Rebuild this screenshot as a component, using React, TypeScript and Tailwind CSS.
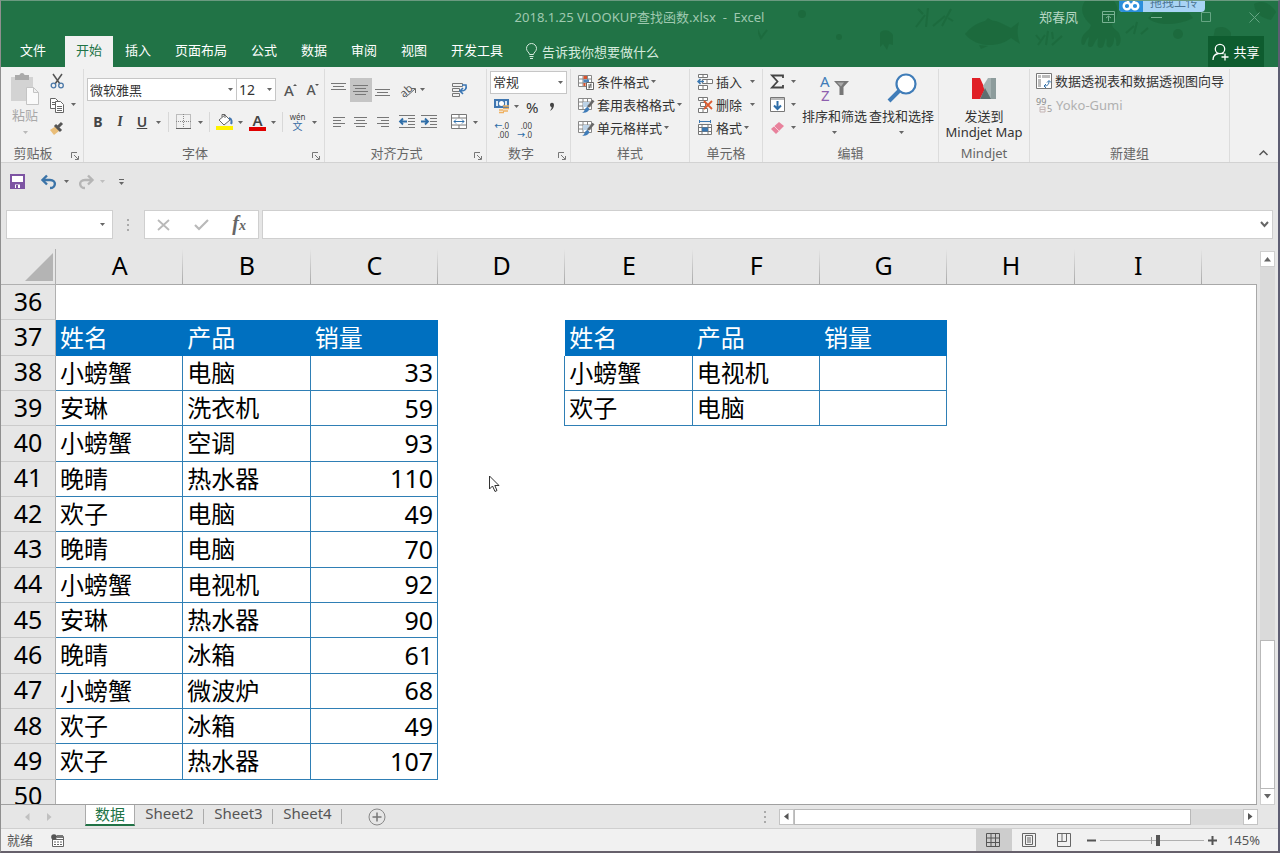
import React, { useState } from "react";

const TABS = ["插入", "页面布局", "公式", "数据", "审阅", "视图", "开发工具"];
const COLS = ["A", "B", "C", "D", "E", "F", "G", "H", "I"];

const SALES: [string, string, number][] = [
  ["小螃蟹", "电脑", 33],
  ["安琳", "洗衣机", 59],
  ["小螃蟹", "空调", 93],
  ["晚晴", "热水器", 110],
  ["欢子", "电脑", 49],
  ["晚晴", "电脑", 70],
  ["小螃蟹", "电视机", 92],
  ["安琳", "热水器", 90],
  ["晚晴", "冰箱", 61],
  ["小螃蟹", "微波炉", 68],
  ["欢子", "冰箱", 49],
  ["欢子", "热水器", 107],
];

const LOOKUPS: [string, string][] = [
  ["小螃蟹", "电视机"],
  ["欢子", "电脑"],
];

const HEADS = ["姓名", "产品", "销量"];

function Caret({ className = "" }: { className?: string }) {
  return (
    <svg width="5" height="3" viewBox="0 0 5 3" className={`shrink-0 ${className}`}>
      <path d="M0 0h5L2.5 3z" fill="#666" />
    </svg>
  );
}

function Svg({ w = 16, h = 16, children }: { w?: number; h?: number; children: React.ReactNode }) {
  return (
    <svg width={w} height={h} viewBox={`0 0 ${w} ${h}`} fill="none" className="shrink-0 overflow-visible">
      {children}
    </svg>
  );
}

function IconBtn({ label, className = "", children }: { label: string; className?: string; children: React.ReactNode }) {
  return (
    <button aria-label={label} className={`flex h-6 items-center justify-center ${className}`}>
      {children}
    </button>
  );
}

function Group({ name, className = "", launcher, children }: { name: string; className?: string; launcher?: boolean; children: React.ReactNode }) {
  return (
    <section className={`flex shrink-0 flex-col border-r border-[#dcdcdc] ${className}`}>
      <div className="h-[75px]">{children}</div>
      <div className="relative text-center leading-[18px] text-[#666]">
        {name}
        {launcher && (
          <button aria-label={`${name}设置`} className="absolute right-1 top-2">
            <Svg w={8} h={8}>
              <path d="M.5 6V.5H6M3 3l4 4M7.5 4v3.5H4" stroke="#777" />
            </Svg>
          </button>
        )}
      </div>
    </section>
  );
}

function Lines({ widths, top }: { widths: number[]; top: number }) {
  return (
    <Svg w={16} h={20}>
      {widths.map((w, i) => (
        <path key={i} d={`M${(15 - w) / 2} ${top + i * 3 + 0.5}h${w}`} stroke="#777" />
      ))}
    </Svg>
  );
}

function SideLines({ right }: { right?: boolean }) {
  return (
    <Svg w={16} h={20}>
      {[12, 8, 12, 8].map((w, i) => (
        <path key={i} d={`M${right ? 14 - w : 2} ${5.5 + i * 3}h${w}`} stroke="#777" />
      ))}
    </Svg>
  );
}

function IndentIcon({ out }: { out?: boolean }) {
  return (
    <Svg w={16} h={14}>
      <path d="M0 .5h16M9 3.5h7M9 6.5h7M9 9.5h7M0 12.5h16" stroke="#777" />
      <path d={out ? "M8 6.5H1M4 3.5l-3 3 3 3" : "M0 6.5h7M4 3.5l3 3-3 3"} stroke="#2f6ea8" strokeWidth="1.8" />
    </Svg>
  );
}

function StyleBtn({ label, children }: { label: string; children: React.ReactNode }) {
  return (
    <button className="flex h-[23px] items-center whitespace-nowrap">
      {children}
      <span className="ml-[3px] mr-[2px]">{label}</span>
      <Caret />
    </button>
  );
}

function GridIcon({ children }: { children?: React.ReactNode }) {
  return (
    <Svg>
      <path d="M.5 1.5h13v11H.5zM.5 5h13M.5 9h13M5 1.5v11M9.5 1.5v11" fill="#fff" stroke="#888" />
      {children}
    </Svg>
  );
}

function Brush() {
  return (
    <>
      <path d="M5 5h6v5H5z" fill="#bcd2e6" />
      <path d="M15.5 3.5L10 10" stroke="#666" strokeWidth="2.6" />
      <path d="M4 15.5c3-.3 2-4.500 5.500-5.500l2 2c-1 3-4.500 4.500-7.500 3.500z" fill="#3f7cb8" />
    </>
  );
}

function TitleArt() {
  return (
    <svg width="520" height="50" viewBox="0 0 520 50" fill="#1b683b" className="pointer-events-none absolute right-0 top-0">
      <g opacity=".75">
        <path d="M207 33c9-11 24-18 38-10l8 4 8-6c-2 7-2 14 1 22l-9-6c-12 10-35 10-46-4z" />
        <path d="M225 22l5-5 8 5zM230 45l-7 3-2-4z" />
        <path d="M327 0h29c7 9 2 18-2 24 2 6 7 5 8 11 2 5-1 11-3 10s1-6-3-9c1 6-3 12-6 10s0-5-2-9c-2 5-2 11-6 10s-2-6-2-10c-4 3-4 10-8 9s-1-6-1-10c-4 2-3 8-6 8s-2-9 2-12c3-3 5-4 6-8-8-7-12-16-6-24z" />
        <path d="M122 32c2-4 10-4 13 2v10l-4-1-2 6-4-6-3 3z" />
        <circle cx="44" cy="13" r="4" />
        <circle cx="81" cy="36" r="3" />
        <circle cx="420" cy="33" r="5" />
        <path d="M457 28c4-3 12-3 16 4v6h-18z" />
        <path d="M390 17c8 8 30 8 45 0l-4-5h-36z" />
        <path d="M496 3c9-5 17 0 22 8l-5 8c-9-2-16-6-17-16z" />
      </g>
      <g stroke="#1b683b" strokeWidth="2" fill="none" opacity=".7">
        <path d="M158 26l9-12m1 12l2-19m5 18l12-10m-3 10l9-17M165 13l-5-5m30 9l5 3" />
        <path d="M280 44l7-10m1 10l2-14m4 14l10-9m-26-1l4 5m12-8l1 7" />
        <path d="M368 32l8-7m0 8l3-12m4 12l7-6" />
        <path d="M-10 28l7 8 2-8 4 9 6-8" />
      </g>
    </svg>
  );
}

function Header() {
  return (
    <header className="relative overflow-hidden bg-[#217346] text-white">
      <TitleArt />
      <div className="relative grid h-[35px] grid-cols-[1fr_auto_1fr] items-center pb-[3px] text-[#9fc9b0]">
        <span />
        <h1 className="whitespace-pre text-[13px]">2018.1.25 VLOOKUP查找函数.xlsx  -  Excel</h1>
        <div className="flex items-center justify-end pr-[18px]">
          <span className="mr-6 text-[#b5d6c3]">郑春凤</span>
          <button aria-label="功能区显示选项" className="mr-9">
            <Svg w={13} h={12}>
              <path d="M.5.5h12v11H.5zM.5 3.5h12M6.5 10V5M4 7l2.500-2L9 7" stroke="#79b293" />
            </Svg>
          </button>
          <button aria-label="最小化" className="mr-[38px]">
            <Svg w={12} h={12}>
              <path d="M0 6.500h11" stroke="#79b293" />
            </Svg>
          </button>
          <button aria-label="最大化" className="mr-[37px]">
            <Svg w={11} h={11}>
              <path d="M.5.5h9v9h-9z" stroke="#65a583" />
            </Svg>
          </button>
          <button aria-label="关闭">
            <Svg w={11} h={11}>
              <path d="M.5.5l10 10M10.500.5l-10 10" stroke="#65a583" />
            </Svg>
          </button>
        </div>
      </div>
      <button className="absolute -top-2 right-[73px] flex h-[19px] w-[86px] overflow-hidden rounded-b-sm bg-[#a9d4f5] text-[12px] text-[#4c7594]">
        <span className="flex h-full w-6 items-center justify-center bg-[#2b8fdc]">
          <svg width="18" height="12" viewBox="0 0 18 12" fill="none" stroke="#fff" strokeWidth="2.4" className="mt-1">
            <circle cx="5" cy="7" r="3.300" />
            <circle cx="13" cy="7" r="3.300" />
            <path d="M6 3a3 3 0 0 1 6 0" />
          </svg>
        </span>
        <span className="flex-1 leading-5">拖拽上传</span>
      </button>
      <nav className="relative flex h-[31px]">
        <button className="w-16 pb-[3px]">文件</button>
        <button className="w-12 bg-[#f1f1f1] pb-[3px] text-[#217346]">开始</button>
        {TABS.map((t) => (
          <button key={t} className="px-3 pb-[3px]">{t}</button>
        ))}
        <button className="ml-[10px] flex items-center gap-1 text-[#d5eadd]">
          <Svg w={13} h={17}>
            <path d="M4.500 11.500c0-2-3-3-3-6a5 5 0 0 1 10 0c0 3-3 4-3 6zM4.500 13.500h4M5 15.500h3" stroke="#d5eadd" />
          </Svg>
          告诉我你想要做什么
        </button>
        <button className="ml-auto mr-[14px] flex w-14 items-center justify-center gap-1 bg-[#0e5c2f]">
          <Svg w={17} h={18}>
            <circle cx="8" cy="6" r="4.700" stroke="#fff" strokeWidth="1.300" />
            <path d="M1 17c0-4 2-6 5.500-6.500M10 10l1.500 1M13 10.500v7M9.500 14h7" stroke="#fff" strokeWidth="1.300" />
          </Svg>
          共享
        </button>
      </nav>
    </header>
  );
}

function Ribbon() {
  return (
    <div className="relative flex h-[96px] border-b border-[#d2d2d2] bg-[#f1f1f1] pt-[2px] text-[#333]">
      <Group name="剪贴板" launcher className="w-[83px] [&>div:last-child]:pr-[18px]">
        <div className="flex">
          <button className="flex w-12 flex-col items-center pt-1 text-[#a9a9a9]">
            <Svg w={30} h={32}>
              <path d="M1 4h22v24H1z" fill="#d3d3d3" />
              <path d="M5 2h14v5H5z" fill="#aaa" />
              <circle cx="12" cy="2.500" r="2.500" fill="#aaa" />
              <path d="M16.500 14.500h7l5 5v12h-12zM23.500 14.500v5h5" fill="#fafafa" stroke="#c4c4c4" />
            </Svg>
            <span className="leading-5">粘贴</span>
            <Caret className="mt-[6px] opacity-40" />
          </button>
          <div className="flex flex-col">
            <IconBtn label="剪切" className="w-4">
              <Svg w={15} h={16}>
                <path d="M3 1l7 10M12 1L5 11" stroke="#555" strokeWidth="1.500" />
                <circle cx="3.500" cy="12.500" r="2.300" stroke="#4a78a8" strokeWidth="1.300" />
                <circle cx="11" cy="12.500" r="2.300" stroke="#4a78a8" strokeWidth="1.300" />
              </Svg>
            </IconBtn>
            <IconBtn label="复制" className="h-[23px]">
              <Svg>
                <path d="M1.500 1.500h5l3 3v7h-8z" fill="#fff" stroke="#666" />
                <path d="M6.500 4.500h5l3 3v8h-8zM8 9.500h5M8 11.500h5M8 13.500h5M3 5.500h3M3 7.500h3" fill="#fff" stroke="#666" />
              </Svg>
              <Caret className="ml-[6px]" />
            </IconBtn>
            <IconBtn label="格式刷" className="w-4">
              <Svg>
                <path d="M1 10l6-4 3 5-5 4z" fill="#e9bd78" />
                <path d="M6 5l6 6M9 7l4-4" stroke="#555" strokeWidth="3" />
              </Svg>
            </IconBtn>
          </div>
        </div>
      </Group>

      <Group name="字体" launcher className="w-[241px] [&>div:last-child]:pr-[18px]">
        <div className="flex h-[41px] items-center pl-[3px]">
          <label className="relative flex items-center">
            <select aria-label="字体名称" className="h-[23px] w-[150px] appearance-none border border-[#c6c6c6] bg-white pl-[2px] leading-5 outline-none">
              <option>微软雅黑</option>
            </select>
            <Caret className="pointer-events-none absolute right-1" />
          </label>
          <label className="relative -ml-px flex items-center">
            <select aria-label="字号" className="h-[23px] w-10 appearance-none border border-[#c6c6c6] bg-white pl-[2px] text-[14px] leading-5 outline-none">
              <option>12</option>
            </select>
            <Caret className="pointer-events-none absolute right-1" />
          </label>
          <IconBtn label="增大字号" className="ml-1 w-[22px] text-[15px] font-medium text-[#555]">
            A<Svg w={4} h={14}><path d="M-1 3l2-2 2 2z" fill="#555" /></Svg>
          </IconBtn>
          <IconBtn label="减小字号" className="w-[22px] text-[14px] font-medium text-[#555]">
            A<Svg w={4} h={14}><path d="M-1 1l2 2 2-2z" fill="#555" /></Svg>
          </IconBtn>
        </div>
        <div className="flex items-center pl-[3px] text-[14px] text-[#444]">
          <IconBtn label="加粗" className="w-[22px] font-bold">B</IconBtn>
          <IconBtn label="倾斜" className="w-[22px] font-serif font-bold italic">I</IconBtn>
          <IconBtn label="下划线" className="w-[22px] font-semibold underline">U</IconBtn>
          <Caret className="ml-[3px] mr-[7px]" />
          <i className="h-5 w-px bg-[#d8d8d8]" />
          <IconBtn label="边框" className="ml-[7px]">
            <Svg>
              <path d="M.5.5h14v14H.5zM7.500 0v15M0 7.500h15" stroke="#888" strokeDasharray="1 1" />
              <path d="M0 14.500h15" stroke="#666" />
            </Svg>
            <Caret className="ml-[6px]" />
          </IconBtn>
          <i className="ml-[6px] h-5 w-px bg-[#d8d8d8]" />
          <IconBtn label="填充颜色" className="ml-[6px]">
            <Svg w={17} h={18}>
              <path d="M3 7l6-5 5 5-6 5z" fill="#fff" stroke="#666" />
              <path d="M6 4V1.500h3V5" stroke="#666" />
              <path d="M13 5c3 1 3 4 2 6" stroke="#4577b0" strokeWidth="2" />
              <path d="M0 13h17v4H0z" fill="#fff200" />
            </Svg>
            <Caret className="ml-[5px]" />
          </IconBtn>
          <IconBtn label="字体颜色" className="ml-[6px]">
            <span className="flex w-[17px] flex-col items-center">
              <span className="text-[15px] font-semibold leading-[13px]">A</span>
              <i className="h-1 w-full bg-[#e00000]" />
            </span>
            <Caret className="ml-[5px]" />
          </IconBtn>
          <i className="ml-[6px] h-5 w-px bg-[#d8d8d8]" />
          <IconBtn label="拼音" className="ml-[7px]">
            <span className="flex w-[15px] flex-col items-center">
              <span className="text-[8px] leading-[8px]">wén</span>
              <span className="text-[10px] leading-[10px] text-[#3a6ea5]">文</span>
            </span>
            <Caret className="ml-[7px]" />
          </IconBtn>
        </div>
      </Group>

      <Group name="对齐方式" launcher className="w-[162px] [&>div:last-child]:pr-[18px]">
        <div className="flex h-[41px] items-center pl-[3px]">
          <IconBtn label="顶端对齐" className="w-[22px]"><Lines widths={[15, 11, 15]} top={3} /></IconBtn>
          <IconBtn label="垂直居中" className="w-[22px] bg-[#c5c5c5]"><Lines widths={[15, 11, 15, 11]} top={5} /></IconBtn>
          <IconBtn label="底端对齐" className="w-[22px]"><Lines widths={[15, 11, 15]} top={9} /></IconBtn>
          <IconBtn label="方向" className="ml-[6px]">
            <Svg w={17} h={16}>
              <text x="0" y="12" fontSize="11" fill="#555" transform="rotate(-42 7 9)">ab</text>
              <path d="M6 15l9-8M11 6.500h4.500V11" stroke="#666" />
            </Svg>
            <Caret className="ml-[3px]" />
          </IconBtn>
          <IconBtn label="自动换行" className="ml-6 w-5">
            <Svg w={17} h={16}>
              <path d="M1.500 1.500h10v3h-10zM1.500 6.500h7v3h-7zM1.500 11.500h7v3h-7z" stroke="#777" />
              <path d="M11 3h4c1 4-1 6-5 6M12 6L9 9l3 3" stroke="#3a76b4" strokeWidth="1.600" />
            </Svg>
          </IconBtn>
        </div>
        <div className="flex items-center pl-[3px]">
          <IconBtn label="左对齐" className="w-[22px]"><SideLines /></IconBtn>
          <IconBtn label="居中" className="w-[22px]"><Lines widths={[13, 9, 13, 9]} top={5} /></IconBtn>
          <IconBtn label="右对齐" className="w-[22px]"><SideLines right /></IconBtn>
          <IconBtn label="减少缩进量" className="ml-[2px] w-[22px]"><IndentIcon out /></IconBtn>
          <IconBtn label="增加缩进量" className="w-[22px]"><IndentIcon /></IconBtn>
          <IconBtn label="合并后居中" className="ml-[11px]">
            <Svg>
              <path d="M.5.5h15v14H.5zM.5 4h15M.5 11h15M8 .5V4M8 11v3.500" fill="#fff" stroke="#777" />
              <path d="M3 7.500h10M5 5.500l-2 2 2 2M11 5.500l2 2-2 2" stroke="#2f6ea8" />
            </Svg>
            <Caret className="ml-[6px]" />
          </IconBtn>
        </div>
      </Group>

      <Group name="数字" launcher className="w-[84px] pl-[3px] [&>div:last-child]:pr-[18px]">
        <label className="relative flex h-[26px] items-center">
          <select aria-label="数字格式" className="h-[23px] w-[77px] appearance-none border border-[#c6c6c6] bg-white pl-[2px] leading-5 outline-none">
            <option>常规</option>
          </select>
          <Caret className="pointer-events-none absolute right-[7px]" />
        </label>
        <div className="flex h-[23px] items-center">
          <IconBtn label="会计数字格式" className="ml-[3px]">
            <Svg w={17} h={17}>
              <path d="M1 1h15v9H1z" fill="#3f76b0" />
              <circle cx="8.500" cy="5.500" r="2.500" fill="#fff" />
              <path d="M3 3h2v5H3zM12 3h2v5h-2z" fill="#dbe8f4" />
              <path d="M10 8h6M10 10.500h6M10 13h5M6 12h4M6 14.500h5" stroke="#efb160" strokeWidth="1.700" />
            </Svg>
            <Caret className="ml-1" />
          </IconBtn>
          <IconBtn label="百分比样式" className="ml-[7px] text-[15px]">%</IconBtn>
          <IconBtn label="千位分隔样式" className="ml-[11px]">
            <Svg w={7} h={10}><path d="M1 2.500a2 2 0 1 1 4 .5c0 3-2 5-4 6 1-2 2-3 1.500-4C1.500 5 1 4 1 2.500z" fill="#444" /></Svg>
          </IconBtn>
        </div>
        <div className="flex h-6 items-center gap-2 pl-1 text-[8px] leading-[9px] text-[#444]">
          <button aria-label="增加小数位数" className="w-[15px] text-right"><b className="text-[#2f6ea8]">←</b>.0<br />.00</button>
          <button aria-label="减少小数位数" className="w-[15px] text-right">.00<br /><b className="text-[#2f6ea8]">→</b>.0</button>
        </div>
      </Group>

      <Group name="样式" className="w-[119px]">
        <div className="flex flex-col pl-[7px] pt-px">
          <StyleBtn label="条件格式">
            <GridIcon>
              <path d="M5.500 2h3.500v3H5.500zM5.500 9h2v3h-2z" fill="#d9532c" />
              <path d="M5.500 5.500H11v3H5.500z" fill="#4b83ba" />
              <path d="M8.500 8.500h7v7h-7zM10 11h4M10 13h4M13 9.500l-2 5" fill="#fff" stroke="#666" />
            </GridIcon>
          </StyleBtn>
          <StyleBtn label="套用表格格式"><GridIcon><Brush /></GridIcon></StyleBtn>
          <StyleBtn label="单元格样式"><GridIcon><Brush /></GridIcon></StyleBtn>
        </div>
      </Group>

      <Group name="单元格" className="w-[73px]">
        <div className="flex flex-col pl-[7px] pt-px [&>button:not(:last-child)_span]:mr-2">
          <StyleBtn label="插入">
            <Svg>
              <path d="M1.500.5h9v3h-9zM6 .5v3M1.500 11.500h9v4h-9zM6 11.500v4M5.500 5.500h10v4h-10zM10 5.500v4" fill="#fff" stroke="#777" />
              <path d="M7 7.500H1M3.500 5L1 7.500 3.500 10" stroke="#3b77b0" strokeWidth="1.500" />
            </Svg>
          </StyleBtn>
          <StyleBtn label="删除">
            <Svg>
              <path d="M1.500.5h9v3h-9zM6 .5v3M1.500 11.500h9v4h-9zM6 11.500v4M3.500 5.500h5v4h-5z" fill="#fff" stroke="#777" />
              <path d="M7 4l8 8M15 4l-8 8" stroke="#dc5b30" strokeWidth="1.800" />
            </Svg>
          </StyleBtn>
          <StyleBtn label="格式">
            <Svg>
              <path d="M1.500 4.500h13v10h-13zM1.500 7.500h13M1.500 11.500h13M5 4.500v10M11 4.500v10" fill="#fff" stroke="#777" />
              <path d="M5 7.500h6v4H5z" fill="#3b77b0" />
              <path d="M2 1.500h12M2.500 0v3M13.500 0v3" stroke="#3b77b0" />
            </Svg>
          </StyleBtn>
        </div>
      </Group>

      <Group name="编辑" className="w-[176px]">
        <div className="flex pl-[6px]">
          <div className="mr-1 flex w-7 flex-col pt-px">
            <IconBtn label="自动求和" className="h-[23px]">
              <Svg w={15} h={15}><path d="M13 4V1.500H2L7.500 7.500 2 13.500h11V11" stroke="#444" strokeWidth="1.800" /></Svg>
              <Caret className="ml-[6px]" />
            </IconBtn>
            <IconBtn label="填充" className="h-[23px]">
              <Svg w={15} h={15}>
                <path d="M.5.5h14v14H.5z" fill="#fff" stroke="#777" />
                <path d="M0 2h15" stroke="#777" />
                <path d="M7.500 4v8M4 8.500L7.500 12 11 8.500" stroke="#2f6ea8" strokeWidth="2" />
              </Svg>
              <Caret className="ml-[6px]" />
            </IconBtn>
            <IconBtn label="清除" className="h-[23px]">
              <Svg w={15} h={14}>
                <path d="M9 1l5 4-8 8-5-5z" fill="#e8829c" />
                <path d="M4 5l5 5" stroke="#f7cdd8" />
              </Svg>
              <Caret className="ml-[6px]" />
            </IconBtn>
          </div>
          <button className="flex w-[67px] flex-col items-center whitespace-nowrap">
            <span className="flex h-[38px] items-center">
              <Svg w={30} h={30}>
                <text x="0" y="14" fontSize="15" fill="#3f7cb8">A</text>
                <text x="1" y="28" fontSize="15" fill="#8e5fae">Z</text>
                <path d="M14 8h15l-5.500 6v8h-4v-8z" fill="#777" />
                <path d="M17 9.500h7l-3 4z" fill="#aaa" />
              </Svg>
            </span>
            <span className="leading-[18px]">排序和筛选</span>
            <Caret className="mt-[6px]" />
          </button>
          <button className="flex w-[67px] flex-col items-center whitespace-nowrap">
            <span className="flex h-[38px] items-center">
              <Svg w={30} h={30}>
                <circle cx="19" cy="11" r="9.500" fill="#fff" stroke="#3f7cb8" strokeWidth="2.200" />
                <path d="M12 18L2 28" stroke="#3f7cb8" strokeWidth="4" />
              </Svg>
            </span>
            <span className="leading-[18px]">查找和选择</span>
            <Caret className="mt-[6px]" />
          </button>
        </div>
      </Group>

      <Group name="Mindjet" className="w-[91px]">
        <button className="flex w-full flex-col items-center whitespace-nowrap">
          <span className="flex h-[39px] items-center">
            <Svg w={24} h={22}>
              <path d="M0 0h8l5 11-5 10H0z" fill="#e01f26" />
              <path d="M24 0h-6l-5 11 5 10h6z" fill="#8d9c9c" />
              <path d="M16 0h3v21h-3L11 8z" fill="#a3b0b0" />
              <path d="M8 21l5-11 6 11z" fill="#5f6e70" />
            </Svg>
          </span>
          <span className="leading-4">发送到</span>
          <span className="leading-4">Mindjet Map</span>
        </button>
      </Group>

      <Group name="新建组" className="w-[200px]">
        <div className="flex flex-col items-start pl-[6px]">
          <button className="flex h-[24px] items-center gap-[3px] whitespace-nowrap">
            <Svg>
              <path d="M.5.5h15v15H.5z" fill="#fff" stroke="#777" />
              <path d="M2 2h3v3H2zM6 2h8v3H6zM2 6h3v8H2z" fill="#bbb" />
              <path d="M8 13c4 0 5-2 5-5M11 9.500l2-2 2 2M10 11l-2 2 2 2" stroke="#2f6ea8" />
            </Svg>
            数据透视表和数据透视图向导
          </button>
          <button className="flex h-[23px] items-center gap-1 text-[13px] text-[#b0b0b0]">
            <Svg>
              <text x="0" y="8" fontSize="9" fill="#888">99</text>
              <text x="11" y="15" fontSize="9" fill="#999">5</text>
              <path d="M4 10h5v5H4zM4 12.500h5" stroke="#c4b4b4" />
            </Svg>
            Yoko-Gumi
          </button>
        </div>
      </Group>
      <button aria-label="折叠功能区" className="absolute bottom-[6px] right-[10px]">
        <Svg w={9} h={6}><path d="M.5 5l4-4 4 4" stroke="#555" strokeWidth="1.500" /></Svg>
      </button>
    </div>
  );
}

function QuickAccess() {
  return (
    <div className="flex h-[37px] items-center pl-[9px]">
      <button aria-label="保存">
        <Svg w={15} h={15}>
          <path d="M1 1h13v13H1z" fill="#fff" stroke="#7d54a3" strokeWidth="2" />
          <path d="M2 8h11v6H2z" fill="#7d54a3" />
          <path d="M5 10.500h5V14H5z" fill="#fff" />
          <path d="M6 11h2v3H6z" fill="#7d54a3" />
        </Svg>
      </button>
      <button aria-label="撤消" className="ml-4 flex items-center">
        <Svg w={16} h={14}>
          <path d="M2 5h7c7 0 6 8 0 8" stroke="#3b74a8" strokeWidth="2.400" />
          <path d="M6 .5L1.500 5 6 9.500" stroke="#3b74a8" strokeWidth="2.400" />
        </Svg>
        <Caret className="ml-[7px]" />
      </button>
      <button aria-label="恢复" className="ml-[9px] flex items-center">
        <Svg w={16} h={14}>
          <path d="M14 5H7c-7 0-6 8 0 8" stroke="#b5b5b5" strokeWidth="2.400" />
          <path d="M10 .5L14.500 5 10 9.500" stroke="#b5b5b5" strokeWidth="2.400" />
        </Svg>
        <Caret className="ml-[6px] opacity-30" />
      </button>
      <button aria-label="自定义快速访问工具栏" className="ml-[14px]">
        <Svg w={6} h={6}><path d="M0 .5h5" stroke="#666" /><path d="M0 3h5L2.500 6z" fill="#666" /></Svg>
      </button>
    </div>
  );
}

function Dots() {
  return (
    <Svg w={3} h={12}>
      <path d="M0 0h2v2H0zM0 5h2v2H0zM0 10h2v2H0z" fill="#aaa" />
    </Svg>
  );
}

function FormulaBar() {
  const [formula, setFormula] = useState("");
  return (
    <div className="flex h-[49px] items-center px-[5px] py-[10px]">
      <div className="relative flex h-[29px] items-center">
        <input aria-label="名称框" className="h-full w-[107px] border border-[#cfcfcf] bg-white px-1 outline-none" />
        <Caret className="absolute right-2" />
      </div>
      <div className="flex w-[31px] justify-center"><Dots /></div>
      <div className="mr-[3px] flex h-[29px] w-[115px] items-center justify-between border border-[#cfcfcf] bg-white px-3">
        <button aria-label="取消"><Svg w={13} h={12}><path d="M1 1l11 10M12 1L1 11" stroke="#b9b9b9" strokeWidth="1.800" /></Svg></button>
        <button aria-label="输入"><Svg w={15} h={12}><path d="M1 6l4 4 9-9" stroke="#b9b9b9" strokeWidth="2.200" /></Svg></button>
        <button aria-label="插入函数" className="font-['Liberation_Serif',serif] text-[20px] font-bold italic leading-5 text-[#666]">
          f<span className="text-[14px]">x</span>
        </button>
      </div>
      <div className="relative flex h-[29px] flex-1 items-center">
        <input
          aria-label="编辑栏"
          value={formula}
          onChange={(e) => setFormula(e.target.value)}
          className="h-full w-full border border-[#cfcfcf] bg-white px-2 outline-none"
        />
        <button aria-label="展开编辑栏" className="absolute right-1">
          <Svg w={9} h={7}><path d="M1 1l3.500 4L8 1" stroke="#666" strokeWidth="2" /></Svg>
        </button>
      </div>
    </div>
  );
}

const BLUE = "border-r border-b border-[#2f7fb5] bg-white";
const HEAD = "bg-[#0070c0] text-white";

function cell(row: number, col: string): { text?: string | number; cls: string } {
  const left = "ABC".indexOf(col);
  const right = "EFG".indexOf(col);
  if (row === 37 && left >= 0) return { text: HEADS[left], cls: HEAD };
  if (row === 37 && right >= 0) return { text: HEADS[right], cls: HEAD };
  if (left >= 0 && row >= 38 && row <= 49) {
    return { text: SALES[row - 38][left], cls: left === 2 ? `${BLUE} pb-px text-right text-[25px]` : BLUE };
  }
  if (right >= 0 && row >= 38 && row <= 39) return { text: LOOKUPS[row - 38][right], cls: BLUE };
  if (col === "D" && row >= 38 && row <= 39) return { cls: "border-r border-[#2f7fb5] bg-white" };
  return { cls: "bg-white" };
}

function Sheet() {
  const rows = Array.from({ length: 15 }, (_, i) => 36 + i);
  return (
    <div className="flex min-h-0 flex-1">
      <div className="relative min-w-0 flex-1 overflow-hidden border-b border-[#a0a0a0]">
        <table className="h-[566px] w-full table-fixed border-separate border-spacing-0 text-black">
          <thead>
            <tr className="h-[36px] text-[25px] leading-[30px]">
              <th className="w-[55px] border-b border-r border-[#b0b0b0] p-0">
                <button aria-label="全选" className="flex w-full justify-end pr-[2px]">
                  <Svg w={28} h={28}><path d="M28 0v28H0z" fill="#b4b4b4" /></Svg>
                </button>
              </th>
              {COLS.map((c) => (
                <th key={c} className="border-b border-[#a8a8a8] bg-[linear-gradient(to_bottom,#e6e6e6,#a8a8a8)] bg-[length:1px_100%] bg-right bg-no-repeat px-0 pb-1 pt-0 font-normal">
                  {c}
                </th>
              ))}
              <th className="w-[55px] border-b border-[#a8a8a8] p-0" />
            </tr>
          </thead>
          <tbody className="text-[24px] leading-[30px]">
            {rows.map((r) => (
              <tr key={r}>
                <th className="border-b border-r border-b-[#cbcbcb] border-r-[#b0b0b0] px-0 pb-[3px] pt-0 text-center text-[25px] font-normal">{r}</th>
                {COLS.map((c) => {
                  const { text, cls } = cell(r, c);
                  return (
                    <td key={c} className={`whitespace-nowrap px-1 pt-0 ${cls}`}>
                      {text}
                    </td>
                  );
                })}
                <td className="border-r border-[#a8a8a8] bg-white p-0" />
              </tr>
            ))}
          </tbody>
        </table>
        {/* mouse pointer */}
        <svg width="11" height="18" viewBox="0 0 11 18" className="absolute left-[488px] top-[226px]">
          <path d="M.5 1v13l3-3 2.500 5.500 2-1L5.800 10.500H10z" fill="#fff" stroke="#333" />
        </svg>
      </div>
      <div className="flex w-[21px] flex-col items-center pt-[2px]">
        <button aria-label="向上滚动" className="flex h-4 w-[15px] items-center justify-center border border-[#cfcfcf] bg-white">
          <Svg w={7} h={5}><path d="M0 4.500h7L3.500 0z" fill="#666" /></Svg>
        </button>
        <div className="flex w-[15px] flex-1 flex-col justify-end bg-[#dadada]">
          <div className="h-[149px] border border-[#b9b9b9] bg-white" />
        </div>
        <button aria-label="向下滚动" className="flex h-4 w-[15px] items-center justify-center border border-t-0 border-[#cfcfcf] bg-white">
          <Svg w={7} h={5}><path d="M0 0h7L3.500 4.500z" fill="#666" /></Svg>
        </button>
      </div>
    </div>
  );
}

function SheetTabs() {
  return (
    <div className="flex h-[23px] text-[15px] text-[#555]">
      <div className="flex w-[84px] items-center gap-[17px] pl-6">
        <button aria-label="上一个工作表"><Svg w={5} h={8}><path d="M4.500 0v8L0 4z" fill="#c0c0c0" /></Svg></button>
        <button aria-label="下一个工作表"><Svg w={5} h={8}><path d="M0 0v8l4.500-4z" fill="#c0c0c0" /></Svg></button>
      </div>
      <button className="-mt-px h-[22px] w-[50px] border-x border-b-2 border-x-[#ababab] border-b-[#217346] bg-white leading-4 text-[#217346]">数据</button>
      {["Sheet2", "Sheet3", "Sheet4"].map((s) => (
        <button key={s} className="flex w-[69px] items-start justify-center bg-[linear-gradient(#ababab,#ababab)] bg-[length:1px_15px] bg-[position:right_4px] bg-no-repeat leading-4">
          {s}
        </button>
      ))}
      <button aria-label="新工作表" className="ml-[26px] flex items-center">
        <Svg w={18} h={18}>
          <circle cx="9" cy="9" r="8" stroke="#888" />
          <path d="M9 4.500v9M4.500 9h9" stroke="#777" strokeWidth="1.500" />
        </Svg>
      </button>
      <div className="ml-auto flex w-[514px] items-center pr-5">
        <Dots />
        <button aria-label="向左滚动" className="ml-3 flex h-4 w-[15px] items-center justify-center border border-[#c4c4c4] bg-white">
          <Svg w={5} h={7}><path d="M4.500 0v7L0 3.500z" fill="#555" /></Svg>
        </button>
        <div className="h-4 flex-1 bg-[#dadada] pr-[52px]">
          <div className="h-full border border-[#b9b9b9] bg-white" />
        </div>
        <button aria-label="向右滚动" className="flex h-4 w-[15px] items-center justify-center border border-[#c4c4c4] bg-white">
          <Svg w={5} h={7}><path d="M0 0v7l4.500-3.500z" fill="#555" /></Svg>
        </button>
      </div>
    </div>
  );
}

function StatusBar() {
  const [zoom, setZoom] = useState(145);
  return (
    <footer className="flex h-[23px] items-center border-t border-[#cfcfcf] bg-[#f1f1f1] pl-[6px] text-[#555]">
      就绪
      <button aria-label="录制宏" className="ml-[18px]">
        <Svg w={13} h={13}>
          <path d="M1.500 2.500h11v10h-11zM1 5.500h12" fill="#fff" stroke="#666" />
          <path d="M3 8h2M6 8h2M9 8h2M3 10.500h2M6 10.500h2M9 10.500h2" stroke="#666" />
          <circle cx="3" cy="3" r="2.800" fill="#555" />
          <path d="M6 1h6v3H6z" fill="#777" />
        </Svg>
      </button>
      <div className="ml-auto flex h-full items-center">
        <IconBtn label="普通" className="h-full w-9 bg-[#cdcdcd]">
          <Svg w={15} h={14}><path d="M.5.5h13v13H.5zM.5 5h13M.5 9.500h13M5 .5v13M9.500 .5v13" stroke="#555" /></Svg>
        </IconBtn>
        <IconBtn label="页面布局视图" className="w-[35px]">
          <Svg w={15} h={14}><path d="M.5.5h13v13H.5zM3.500 2.500h7v9h-7zM5 5h4M5 7h4M5 9h4" stroke="#666" /></Svg>
        </IconBtn>
        <IconBtn label="分页预览" className="w-[35px]">
          <Svg w={15} h={14}><path d="M.5.5h13v13H.5zM.5 8.500h9v-8M5 .5v8" stroke="#666" /></Svg>
        </IconBtn>
        <button aria-label="缩小" className="ml-[5px]"><Svg w={9} h={3}><path d="M0 1.500h9" stroke="#555" strokeWidth="2" /></Svg></button>
        <div className="relative mx-1 flex w-[104px] items-center">
          <i className="pointer-events-none absolute left-[51px] h-[7px] w-px bg-[#999]" />
          <input
            type="range"
            aria-label="显示比例"
            min={10}
            max={250}
            value={zoom}
            onChange={(e) => setZoom(Number(e.target.value))}
            className="h-px w-full appearance-none bg-[#b0b0b0] [&::-webkit-slider-thumb]:h-[11px] [&::-webkit-slider-thumb]:w-1 [&::-webkit-slider-thumb]:appearance-none [&::-webkit-slider-thumb]:bg-[#555]"
          />
        </div>
        <button aria-label="放大"><Svg w={9} h={9}><path d="M0 4.500h9M4.500 0v9" stroke="#555" strokeWidth="2" /></Svg></button>
        <span className="ml-[10px] mr-[18px]">{zoom}%</span>
      </div>
    </footer>
  );
}

export default function App() {
  return (
    <div className="flex h-screen flex-col overflow-hidden border border-b-2 border-r-2 border-b-[#66606b] border-l-[#8f8f8f] border-r-[#5d5d72] border-t-[#6b9a80] bg-[#e6e6e6] font-['Noto_Sans','Noto_Sans_CJK_SC',sans-serif] text-[13px] leading-5">
      <Header />
      <Ribbon />
      <QuickAccess />
      <FormulaBar />
      <Sheet />
      <SheetTabs />
      <StatusBar />
    </div>
  );
}
